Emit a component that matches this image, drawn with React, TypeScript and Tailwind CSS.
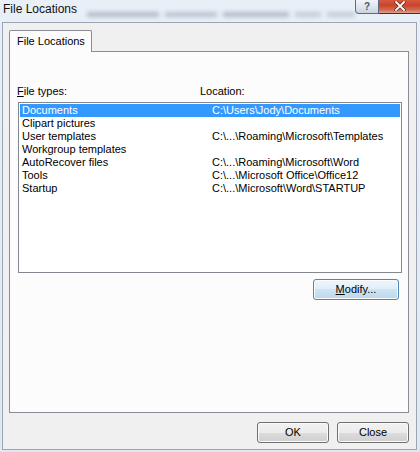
import React from "react";

const rows: [string, string][] = [
  ["Documents", "C:\\Users\\Jody\\Documents"],
  ["Clipart pictures", ""],
  ["User templates", "C:\\...\\Roaming\\Microsoft\\Templates"],
  ["Workgroup templates", ""],
  ["AutoRecover files", "C:\\...\\Roaming\\Microsoft\\Word"],
  ["Tools", "C:\\...\\Microsoft Office\\Office12"],
  ["Startup", "C:\\...\\Microsoft\\Word\\STARTUP"],
];

function Win7Button({
  children,
  width,
  primary = false,
}: {
  children: React.ReactNode;
  width: string;
  primary?: boolean;
}) {
  return (
    <div
      className={
        "h-[21px] rounded-[3px] border flex items-center justify-center shadow-[inset_0_0_0_1px_#fbfbfb] " +
        width +
        " " +
        (primary
          ? "border-[#4f86b5] bg-[linear-gradient(to_bottom,#edf5fb_0%,#dfeef8_50%,#cde4f3_50%,#bcd8ec_100%)]"
          : "border-[#707070] bg-[linear-gradient(to_bottom,#f2f2f2_0%,#ebebeb_50%,#dddddd_50%,#cfcfcf_100%)]")
      }
    >
      <span className="leading-[13px] text-[11px] text-black whitespace-nowrap">{children}</span>
    </div>
  );
}

export default function App() {
  return (
    <div className="w-[420px] h-[452px] overflow-hidden flex flex-col bg-[linear-gradient(to_bottom,#e9eff6_0%,#dfe8f2_100%)] font-['Liberation_Sans',Arial,sans-serif] text-[11px] text-black">
      {/* Title bar */}
      <div className="h-[22px] shrink-0 flex items-start">
        <div className="shrink-0 whitespace-nowrap pl-[3px] pt-[1px] text-[12px] leading-[16px] text-[#111]">
          File Locations
        </div>
        <div className="flex items-center gap-[6px] mt-[12px] ml-[10px] blur-[2px] opacity-60">
          <div className="w-[72px] h-[5px] bg-[#8e9bab]" />
          <div className="w-[52px] h-[5px] bg-[#9aa7b7]" />
          <div className="w-[66px] h-[5px] bg-[#8e9bab]" />
          <div className="w-[26px] h-[5px] bg-[#a8b4c2]" />
          <div className="w-[28px] h-[5px] bg-[#a8b4c2]" />
        </div>
        <div className="ml-auto mr-[2px] flex shrink-0">
          <div className="w-[24px] h-[14px] rounded-bl-[4px] border border-t-0 border-[#5d6b7d] bg-[linear-gradient(to_bottom,#f1f4f8_0%,#dfe6ee_50%,#c9d3de_100%)] flex items-center justify-center">
            <span className="text-[10px] leading-[11px] font-bold text-[#4a5566]">?</span>
          </div>
          <div className="w-[43px] h-[14px] rounded-br-[4px] border border-t-0 border-l-0 border-[#5a2a22] bg-[linear-gradient(to_bottom,#d8593f_0%,#c7442a_40%,#d06a50_75%,#e2a08c_100%)] flex items-start justify-center pt-[1px]">
            <svg width="12" height="10" viewBox="0 0 12 10">
              <path d="M2 1 L10 9 M10 1 L2 9" stroke="#5a2a22" strokeWidth="3.2" strokeLinecap="square" />
              <path d="M2 1 L10 9 M10 1 L2 9" stroke="#ffffff" strokeWidth="1.8" strokeLinecap="square" />
            </svg>
          </div>
        </div>
      </div>

      {/* Window body */}
      <div className="ml-[2px] mr-[3px] h-[428px] shrink-0 border border-[#9aa6b5] bg-[#f0f0f0] flex flex-col pl-[6px] pt-[7px]">
        {/* Tab */}
        <div className="flex">
          <div className="relative z-10 w-[83px] h-[22px] mb-[-1px] border border-b-0 border-[#898c95] rounded-t-[2px] bg-[#fcfcfc] flex items-center pl-[7px]">
            <span className="leading-[13px] whitespace-nowrap">File Locations</span>
          </div>
        </div>

        {/* Panel */}
        <div className="w-[400px] h-[362px] border border-[#898c95] bg-[#fcfcfc] flex flex-col">
          <div className="flex mt-[32px] pl-[7px] leading-[15px]">
            <span className="w-[183px]">
              <span className="underline">F</span>ile types:
            </span>
            <span>Location:</span>
          </div>

          <div className="ml-[8px] mt-[3px] w-[384px] h-[171px] border border-[#828790] bg-white p-[1px] flex flex-col">
            {rows.map(([name, loc], i) => (
              <div
                key={name}
                className={
                  "h-[13px] flex items-center leading-[13px] " +
                  (i === 0 ? "bg-[#3399ff] text-white" : "")
                }
              >
                <span className="w-[192px] pl-[2px] whitespace-nowrap">{name}</span>
                <span className="whitespace-nowrap">{loc}</span>
              </div>
            ))}
          </div>

          <div className="flex justify-end mt-[6px] mr-[9px]">
            <Win7Button width="w-[86px]" primary>
              <span className="underline">M</span>odify...
            </Win7Button>
          </div>
        </div>

        {/* Bottom buttons */}
        <div className="flex justify-end gap-[8px] mt-[9px] mr-[7px]">
          <Win7Button width="w-[72px]">OK</Win7Button>
          <Win7Button width="w-[72px]">Close</Win7Button>
        </div>
      </div>
    </div>
  );
}
